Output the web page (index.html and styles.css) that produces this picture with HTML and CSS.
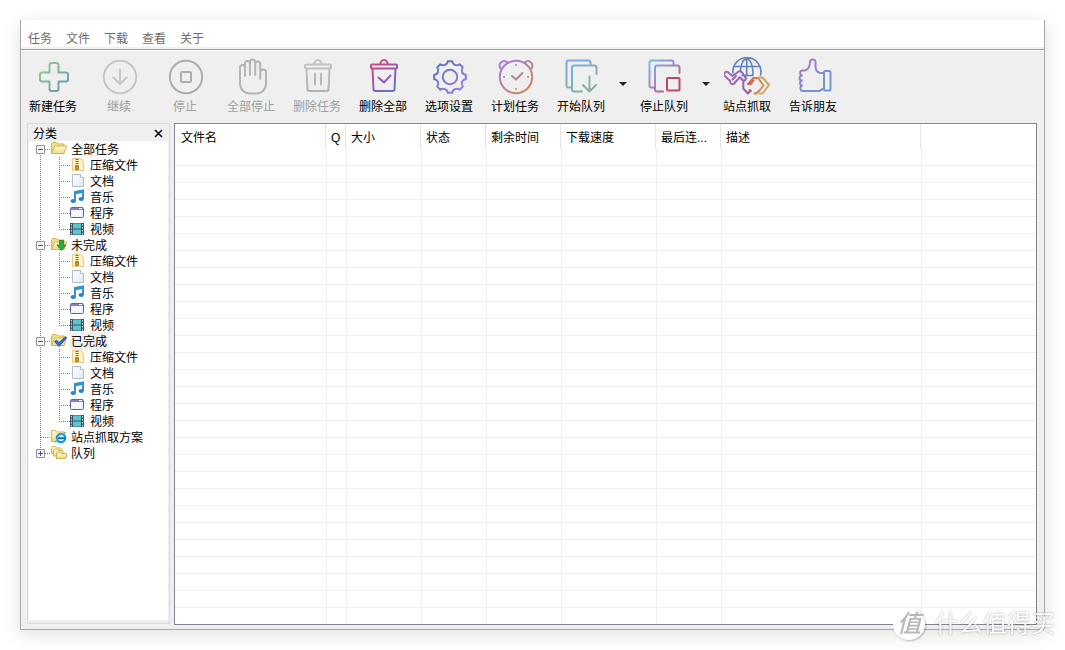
FILE: index.html
```html
<!DOCTYPE html>
<html lang="zh-CN">
<head>
<meta charset="utf-8">
<title>下载任务</title>
<link rel="stylesheet" href="styles.css">
</head>
<body>
<svg class="defs" width="0" height="0" aria-hidden="true">
  <defs>
    <linearGradient id="g-add" gradientUnits="userSpaceOnUse" x1="6" y1="6" x2="34" y2="34"><stop offset="0.2" stop-color="#8cc495"/><stop offset="0.8" stop-color="#6ba3b2"/></linearGradient>
    <linearGradient id="g-gray" gradientUnits="userSpaceOnUse" x1="0" y1="2" x2="0" y2="36"><stop offset="0" stop-color="#c6c6c6"/><stop offset="1" stop-color="#b0b0b0"/></linearGradient>
    <linearGradient id="g-del" gradientUnits="userSpaceOnUse" x1="8" y1="6" x2="32" y2="34"><stop offset="0" stop-color="#d8467c"/><stop offset="0.5" stop-color="#9b58a8"/><stop offset="1" stop-color="#5d79d0"/></linearGradient>
    <linearGradient id="g-gear" gradientUnits="userSpaceOnUse" x1="8" y1="6" x2="32" y2="34"><stop offset="0" stop-color="#5878b8"/><stop offset="1" stop-color="#a07be0"/></linearGradient>
    <linearGradient id="g-clock" gradientUnits="userSpaceOnUse" x1="8" y1="6" x2="30" y2="36"><stop offset="0" stop-color="#a87bdc"/><stop offset="1" stop-color="#c98a58"/></linearGradient>
    <linearGradient id="g-start" gradientUnits="userSpaceOnUse" x1="10" y1="4" x2="24" y2="36"><stop offset="0" stop-color="#7fa8e4"/><stop offset="1" stop-color="#7fb796"/></linearGradient>
    <linearGradient id="g-stop" gradientUnits="userSpaceOnUse" x1="6" y1="4" x2="34" y2="34"><stop offset="0" stop-color="#82b4ee"/><stop offset="0.5" stop-color="#a086b8"/><stop offset="1" stop-color="#c43f66"/></linearGradient>
    <linearGradient id="g-thumb" gradientUnits="userSpaceOnUse" x1="8" y1="2" x2="34" y2="32"><stop offset="0" stop-color="#b07cc4"/><stop offset="0.5" stop-color="#8b84d4"/><stop offset="1" stop-color="#6f9ccc"/></linearGradient>
    <linearGradient id="g-grab" gradientUnits="userSpaceOnUse" x1="0" y1="0" x2="26" y2="0"><stop offset="0" stop-color="#a86bb0"/><stop offset="1" stop-color="#8a62b4"/></linearGradient>
    <linearGradient id="g-grab2" gradientUnits="userSpaceOnUse" x1="24" y1="0" x2="42" y2="0"><stop offset="0" stop-color="#d0604a"/><stop offset="1" stop-color="#d09a58"/></linearGradient>
    <linearGradient id="g-folder" x1="0" y1="0" x2="0" y2="1"><stop offset="0" stop-color="#fffbd0"/><stop offset="1" stop-color="#f3dc80"/></linearGradient>
    <linearGradient id="g-page" x1="0" y1="0" x2="1" y2="1"><stop offset="0" stop-color="#ffffff"/><stop offset="1" stop-color="#dde8f6"/></linearGradient>
  </defs>
  <symbol id="folder" viewBox="0 0 16 16">
    <path d="M.5 12.500v-10l1-1h4l1.500 1.500h6v9.500z" fill="#f3e08e" stroke="#d3b352"/>
    <path d="M.5 12.500l3-7.500h12l-2.500 7.500z" fill="url(#g-folder)" stroke="#d3b352"/>
  </symbol>
  <symbol id="folder-down" viewBox="0 0 16 16">
    <use href="#folder"/>
    <path d="M8.500 3.500h4v4.500h2.500l-4.500 5.500-4.500-5.500h2.500z" fill="#2fae33" stroke="#16811c" stroke-width=".8"/>
  </symbol>
  <symbol id="folder-done" viewBox="0 0 16 16">
    <use href="#folder"/>
    <path d="M3.500 8.500l2-1.500 2.500 2.500 6.500-6 1 1.500-7.500 8.500z" fill="#2f6fe0" stroke="#1745a8" stroke-width=".8"/>
  </symbol>
  <symbol id="folder-web" viewBox="0 0 16 16">
    <path d="M.5 12.500v-11h4l1 1.500h8v9.500z" fill="url(#g-folder)" stroke="#d3b352"/>
    <circle cx="10" cy="9" r="4.200" fill="#e4f6ff" stroke="#1d94d8" stroke-width="2.200"/>
    <path d="M7 9.200h7.500" stroke="#1470b8" stroke-width="2"/>
    <path d="M5 14c-2-2 5-10 10-10.500" fill="none" stroke="#52bdf0"/>
  </symbol>
  <symbol id="folders" viewBox="0 0 16 16">
    <g fill="url(#g-folder)" stroke="#cfb350">
      <path d="M.5 8.500v-6l1-1h3l1 1.500h4.500v5.500z"/>
      <path d="M2.500 11v-6l1-1h3l1 1.500h4.500v5.500z"/>
      <path d="M5.500 13.500v-5.500l1-1h3l1 1.500h5v4l-1.500 1z"/>
    </g>
  </symbol>
  <symbol id="zip" viewBox="0 0 16 16">
    <path d="M2.500 1.500h8l3 3v9h-11z" fill="#fff0c0" stroke="#e6cb8c"/>
    <path d="M7 2v7" stroke="#8c6a20" stroke-width="3" stroke-dasharray="1 1"/>
    <path d="M5.500 9h3v3.500h-3z" fill="#c99a34" stroke="#a98035"/>
  </symbol>
  <symbol id="doc" viewBox="0 0 16 16">
    <path d="M2.500 1.500h8l3 3v9h-11z" fill="url(#g-page)" stroke="#b3bccb"/>
    <path d="M10.500 1.500v3h3" fill="#fff" stroke="#b3bccb"/>
  </symbol>
  <symbol id="music" viewBox="0 0 16 16">
    <path d="M5 12v-9l8-1.500v8.500" fill="none" stroke="#1a74c0" stroke-width="1.600"/>
    <path d="M4.300 2.200l9.500-1.700v3.300l-9.500 1.700z" fill="#2b96dc"/>
    <ellipse cx="3.200" cy="12" rx="2.700" ry="2" fill="#2486cc"/>
    <ellipse cx="11.200" cy="10" rx="2.700" ry="2" fill="#2486cc"/>
  </symbol>
  <symbol id="program" viewBox="0 0 16 16">
    <rect x=".5" y="2.500" width="13" height="10" rx="1" fill="#f3f5fb" stroke="#65619f"/>
    <path d="M1 3h12v2h-12z" fill="#8580c4"/>
    <path d="M9 3.500h3" stroke="#fff"/>
  </symbol>
  <symbol id="video" viewBox="0 0 16 16">
    <path d="M0 2h14v12h-14z" fill="#3f5468"/>
    <path d="M3 2.500h8v5h-8zM3 8.500h8v5h-8z" fill="#5cc6d0"/>
    <path d="M1.500 3v11M12.500 3v11" stroke="#d5e2ec" stroke-dasharray="1.500 1.500"/>
  </symbol>
</svg>

<div class="window">
  <nav class="menu">
    <button>任务</button><button>文件</button><button>下载</button><button>查看</button><button>关于</button>
  </nav>

  <div class="toolbar">
    <button class="tool">
      <svg class="glyph" viewBox="0 0 40 40" stroke="url(#g-add)"><path d="M17.500 6h5a2 2 0 0 1 2 2v7.500h7.500a2 2 0 0 1 2 2v5a2 2 0 0 1-2 2h-7.500v7.500a2 2 0 0 1-2 2h-5a2 2 0 0 1-2-2v-7.500h-7.500a2 2 0 0 1-2-2v-5a2 2 0 0 1 2-2h7.500v-7.500a2 2 0 0 1 2-2z"/></svg>
      <span>新建任务</span>
    </button>
    <button class="tool" disabled>
      <svg class="glyph" viewBox="0 0 40 40" stroke="#c6c6c6"><circle cx="20" cy="20" r="16.200"/><path d="M20 12.500v14M13.500 20.500l6.500 6.500 6.500-6.500"/></svg>
      <span>继续</span>
    </button>
    <button class="tool" disabled>
      <svg class="glyph" viewBox="0 0 40 40" stroke="#adadad"><circle cx="20" cy="20" r="16.200"/><rect x="15" y="15" width="10" height="10" rx="1"/></svg>
      <span>停止</span>
    </button>
    <button class="tool" disabled>
      <svg class="glyph" viewBox="0 0 40 40" stroke="#b4b4b4"><path d="M8 26v-15a2.500 2.500 0 0 1 5 -1v9M13 12v-5.500a2.500 2.500 0 0 1 5 0v11.500M18 8v-3a2.600 2.600 0 0 1 5.200 0v13M23.200 8v-1a2.500 2.500 0 0 1 5 0v15M28.200 15a2.900 2.900 0 0 1 5.800 1v11a9.500 9.500 0 0 1-9.500 9.500h-7a9.500 9.500 0 0 1-9.500-9.500"/></svg>
      <span>全部停止</span>
    </button>
    <button class="tool" disabled>
      <svg class="glyph" viewBox="0 0 40 40" stroke="url(#g-gray)"><rect x="7" y="7.500" width="26" height="4" rx="1"/><path d="M16.500 7a3.500 4 0 0 1 7 0M8.500 12l1 20a2 2 0 0 0 2 2h17a2 2 0 0 0 2-2l1-20M17 16.500v11M23 16.500v11"/></svg>
      <span>删除任务</span>
    </button>
    <button class="tool">
      <svg class="glyph" viewBox="0 0 40 40" stroke="url(#g-del)"><rect x="7" y="7.500" width="26" height="4" rx="1"/><path d="M16.500 7a3.500 4 0 0 1 7 0M8.500 12l1 20a2 2 0 0 0 2 2h17a2 2 0 0 0 2-2l1-20M14.500 20.500l5.500 5 6.500-7"/></svg>
      <span>删除全部</span>
    </button>
    <button class="tool">
      <svg class="glyph" viewBox="0 0 40 40" stroke="url(#g-gear)"><circle cx="20" cy="20" r="7.200"/><path d="M17.770 4.150L22.230 4.150A4.500 4.500 0 0 0 29.630 7.220L32.780 10.370A4.500 4.500 0 0 0 35.850 17.770L35.850 22.230A4.500 4.500 0 0 0 32.780 29.630L29.630 32.780A4.500 4.500 0 0 0 22.230 35.850L17.770 35.850A4.500 4.500 0 0 0 10.370 32.780L7.220 29.630A4.500 4.500 0 0 0 4.150 22.230L4.150 17.770A4.500 4.500 0 0 0 7.220 10.370L10.370 7.220A4.500 4.500 0 0 0 17.770 4.150z"/></svg>
      <span>选项设置</span>
    </button>
    <button class="tool">
      <svg class="glyph" viewBox="0 0 40 40" stroke="url(#g-clock)"><circle cx="20" cy="20" r="16.200"/><path d="M4.500 11.500a4.200 4.200 0 1 1 7.500-5.500M35.500 11.500a4.200 4.200 0 1 0-7.500-5.500M16 19l4 3.500 6.500-6.500M20 8v.1M20 32v.1M8 20h.1M32 20h.1"/></svg>
      <span>计划任务</span>
    </button>
    <button class="tool">
      <svg class="glyph" viewBox="0 0 40 40" stroke="url(#g-start)"><path d="M9 30.500h-2.500a2 2 0 0 1-2-2v-23a2 2 0 0 1 2-2h20a2 2 0 0 1 2 2v2.500M20 34.500h-8a2 2 0 0 1-2-2v-22a2 2 0 0 1 2-2h20.500a2 2 0 0 1 2 2v6.500M27.500 19.500v15M21 28l6.500 6.500 6.500-6.500"/></svg>
      <span>开始队列</span>
    </button>
    <button class="drop" aria-label="开始队列选项"></button>
    <button class="tool">
      <svg class="glyph" viewBox="0 0 40 40" stroke="url(#g-stop)"><path d="M9 30.500h-2.500a2 2 0 0 1-2-2v-23a2 2 0 0 1 2-2h20a2 2 0 0 1 2 2v2.500M18 34.500h-6a2 2 0 0 1-2-2v-22a2 2 0 0 1 2-2h20.500a2 2 0 0 1 2 2v5.500"/><rect x="22" y="21" width="12.500" height="12.500" rx="1" stroke="#c0466e"/></svg>
      <span>停止队列</span>
    </button>
    <button class="drop" aria-label="停止队列选项"></button>
    <button class="tool">
      <svg class="glyph wide" viewBox="1 0 48 40"><g stroke="#6480c0" stroke-width="1.600"><path d="M10 16a14 14 0 1 1 27.500 2M17.500 14c0-6 2.500-12 6.200-12s6.300 6 6.300 16M11.500 9.500h24.500M23.700 2v17M19 18.500h11"/></g><path d="M1.300 18.500c-.8-2.500 1.500-4.500 3.500-3.500l4.500 4 6-4.300c1.500-.8 3-.5 4 1l3.500 5.500c.5 2-2 3-3 2l-3-3-6 6.500c-1 1-3 .5-3.500-1v-1.500zM20.300 24v7.500l4.700 5 2.500-3M9.500 22.500l3.500-3.500" stroke="url(#g-grab)"/><path d="M26 26l4.500-5h4.500l5.500 7.500-4 5-3.500 3h-1.500M25 27h3l2.500-3.500M26.500 33l1.500 1" stroke="url(#g-grab2)"/><path d="M36 20.500h3.500l6.500 7.500-6.500 8.500h-3" stroke="#cda660"/></svg>
      <span>站点抓取</span>
    </button>
    <button class="tool">
      <svg class="glyph" viewBox="1 0 40 40" stroke="url(#g-thumb)"><path d="M30 16h-3c-3.500-1-4.500-4-4.500-6.500v-4.500c0-3-5-3.500-5.500 0 0 4.500-2 7.500-5 8.500h-2.500c-3 0-3 4.500-.5 5-3.500.5-3 5 0 5-3 .5-2.500 4.500 0 5-2.500 1-2 5.500 1 5.500h16l4-2"/><rect x="31" y="14" width="6.500" height="19.500" rx="1"/></svg>
      <span>告诉朋友</span>
    </button>
  </div>

  <main class="content">
    <aside class="sidebar">
      <header class="side-head"><h2>分类</h2><button class="close" aria-label="关闭"><svg viewBox="0 0 9 9"><path d="M1 1l7 7M8 1l-7 7"/></svg></button></header>
      <ul class="tree">
        <li>
          <div class="row"><button class="toggle" aria-label="折叠"></button><i class="dots"></i><svg><use href="#folder"/></svg><span>全部任务</span></div>
          <ul class="branch">
            <li class="row"><i class="dots"></i><svg><use href="#zip"/></svg><span>压缩文件</span></li>
            <li class="row"><i class="dots"></i><svg><use href="#doc"/></svg><span>文档</span></li>
            <li class="row"><i class="dots"></i><svg><use href="#music"/></svg><span>音乐</span></li>
            <li class="row"><i class="dots"></i><svg><use href="#program"/></svg><span>程序</span></li>
            <li class="row"><i class="dots"></i><svg><use href="#video"/></svg><span>视频</span></li>
          </ul>
        </li>
        <li>
          <div class="row"><button class="toggle" aria-label="折叠"></button><i class="dots"></i><svg><use href="#folder-down"/></svg><span>未完成</span></div>
          <ul class="branch">
            <li class="row"><i class="dots"></i><svg><use href="#zip"/></svg><span>压缩文件</span></li>
            <li class="row"><i class="dots"></i><svg><use href="#doc"/></svg><span>文档</span></li>
            <li class="row"><i class="dots"></i><svg><use href="#music"/></svg><span>音乐</span></li>
            <li class="row"><i class="dots"></i><svg><use href="#program"/></svg><span>程序</span></li>
            <li class="row"><i class="dots"></i><svg><use href="#video"/></svg><span>视频</span></li>
          </ul>
        </li>
        <li>
          <div class="row selected"><button class="toggle" aria-label="折叠"></button><i class="dots"></i><svg><use href="#folder-done"/></svg><span>已完成</span></div>
          <ul class="branch">
            <li class="row"><i class="dots"></i><svg><use href="#zip"/></svg><span>压缩文件</span></li>
            <li class="row"><i class="dots"></i><svg><use href="#doc"/></svg><span>文档</span></li>
            <li class="row"><i class="dots"></i><svg><use href="#music"/></svg><span>音乐</span></li>
            <li class="row"><i class="dots"></i><svg><use href="#program"/></svg><span>程序</span></li>
            <li class="row"><i class="dots"></i><svg><use href="#video"/></svg><span>视频</span></li>
          </ul>
        </li>
        <li><div class="row leaf"><i class="dots"></i><svg><use href="#folder-web"/></svg><span>站点抓取方案</span></div></li>
        <li><div class="row"><button class="toggle closed" aria-label="展开"></button><i class="dots"></i><svg><use href="#folders"/></svg><span>队列</span></div></li>
      </ul>
    </aside>

    <section class="list">
      <table>
        <colgroup><col class="c-name"><col class="c-q"><col class="c-md"><col class="c-sm"><col class="c-md"><col class="c-speed"><col class="c-sm"><col class="c-desc"><col></colgroup>
        <thead><tr><th>文件名</th><th>Q</th><th>大小</th><th>状态</th><th>剩余时间</th><th>下载速度</th><th>最后连...</th><th>描述</th><th></th></tr></thead>
        <tbody><tr><td></td><td></td><td></td><td></td><td></td><td></td><td></td><td></td><td></td></tr></tbody>
      </table>
    </section>
  </main>
</div>

<div class="watermark"><span class="seal">值</span><span>什么值得买</span></div>
</body>
</html>
```

FILE: styles.css
```css
* { box-sizing: border-box; }

body {
  margin: 0;
  padding: 20px;
  height: 100vh;
  background: #fff;
  color: #000;
  font: 12px/16px "Liberation Sans", "Noto Sans CJK SC", sans-serif;
}

button {
  margin: 0;
  padding: 0;
  border: 0;
  background: none;
  color: inherit;
  font: inherit;
}

ul { margin: 0; padding: 0; list-style: none; }

.defs { position: absolute; }

.window {
  display: flex;
  flex-direction: column;
  height: 100%;
  min-height: 480px;
  border: 1px solid #a8a8a8;
  border-top: 0;
  background: #efefef;
  box-shadow: 0 4px 18px rgba(0, 0, 0, 0.13);
}

/* Menu bar */
.menu {
  display: flex;
  height: 30px;
  padding-top: 9px;
  border-bottom: 1px solid #a0a0a0;
  background: linear-gradient(#fff 27px, #f0f0f0 27px);
  color: #6d6d6d;
}
.menu button { height: 20px; padding: 0 7px; }

/* Toolbar */
.toolbar {
  display: flex;
  height: 73px;
  border-top: 1px solid #fff;
}
.tool {
  display: flex;
  flex-direction: column;
  align-items: center;
  width: 66px;
  padding-top: 6px;
  white-space: nowrap;
}
.tool span { padding: 1px 2px 0 0; line-height: 18px; }
.tool:disabled { color: #a0a0a0; }
.glyph {
  width: 40px;
  height: 40px;
  fill: none;
  stroke-width: 2;
  stroke-linecap: round;
  stroke-linejoin: round;
}
.glyph.wide { width: 48px; }
.drop {
  display: flex;
  justify-content: center;
  width: 17px;
  padding: 31px 1px 0 0;
}
.drop::before {
  content: "";
  border: 4px solid transparent;
  border-top-color: #222;
  border-bottom: 0;
}

/* Main area */
.content {
  display: flex;
  flex: 1;
  gap: 4px;
  min-height: 0;
  padding: 0 7px 4px 6px;
}

.sidebar {
  display: flex;
  flex-direction: column;
  flex: none;
  width: 143px;
  margin-bottom: 1px;
  padding: 0 1px 3px;
  border: 1px solid #dcdcdc;
}
.side-head {
  display: flex;
  align-items: center;
  justify-content: space-between;
  height: 17px;
  padding: 2px 5px 0 4px;
}
.side-head h2 { margin: 0; font-size: 12px; font-weight: 400; }
.close { display: flex; }
.close svg { width: 9px; height: 9px; stroke: #000; stroke-width: 1.500; }

/* Category tree */
.tree {
  flex: 1;
  overflow: hidden;
  background: repeating-linear-gradient(#808080 0 1px, transparent 1px 2px) 11px 8px / 1px 304px no-repeat #fff;
}
.branch {
  padding-left: 30px;
  background: repeating-linear-gradient(#808080 0 1px, transparent 1px 2px) 30px 0 / 1px 72px no-repeat;
}
.row {
  display: flex;
  align-items: center;
  height: 16px;
  padding-left: 7px;
  white-space: nowrap;
}
.row svg { flex: none; width: 16px; height: 16px; }
.row span { margin-left: 3px; padding: 2px 1px 0; }
.row.leaf { padding-left: 12px; }
.branch .row { padding-left: 0; }
.selected span { background: #f0f0f0; }
.dots {
  flex: none;
  width: 6px;
  height: 1px;
  background: repeating-linear-gradient(90deg, #808080 0 1px, transparent 1px 2px);
}
.leaf .dots { width: 10px; }
.branch .dots { width: 11px; }
.toggle {
  flex: none;
  width: 9px;
  height: 9px;
  border: 1px solid #919191;
  border-radius: 1px;
  background: linear-gradient(#3a4fa8, #3a4fa8) center / 5px 1px no-repeat #f8f8f8;
}
.toggle.closed {
  background:
    linear-gradient(#3a4fa8, #3a4fa8) center / 5px 1px no-repeat,
    linear-gradient(#3a4fa8, #3a4fa8) center / 1px 5px no-repeat #f8f8f8;
}

/* Task list */
.list {
  flex: 1;
  min-width: 0;
  overflow: hidden;
  border: 1px solid #828790;
  background: #fff;
}
table {
  width: 100%;
  height: 100%;
  table-layout: fixed;
  border-spacing: 0;
}
.c-name { width: 151px; }
.c-q { width: 20px; }
.c-sm { width: 65px; }
.c-md { width: 75px; }
.c-speed { width: 95px; }
.c-desc { width: 200px; }
th {
  height: 25px;
  padding: 2px 0 0 5px;
  border-right: 1px solid #e5e5e5;
  font-weight: 400;
  text-align: left;
  white-space: nowrap;
}
th:first-child { padding-left: 6px; }
th:last-child { border-right: 0; }
td {
  padding: 0;
  border-left: 1px solid #efefef;
  background: repeating-linear-gradient(transparent 0 16px, #efefef 16px 17px);
}
td:first-child { border-left: 0; }

/* Site mark over the bottom right corner */
.watermark {
  position: fixed;
  right: 10px;
  bottom: 10px;
  display: flex;
  align-items: center;
  gap: 10px;
  color: #fff;
  font-size: 24px;
  line-height: 32px;
  text-shadow: 0 0 2px rgba(0, 0, 0, 0.4);
  pointer-events: none;
}
.seal {
  width: 32px;
  height: 32px;
  border-radius: 50%;
  background: #fff;
  box-shadow: 1px 1px 2px rgba(0, 0, 0, 0.25);
  color: #b8b8b8;
  font-weight: 500;
  font-style: italic;
  text-align: center;
  text-shadow: none;
}
```
